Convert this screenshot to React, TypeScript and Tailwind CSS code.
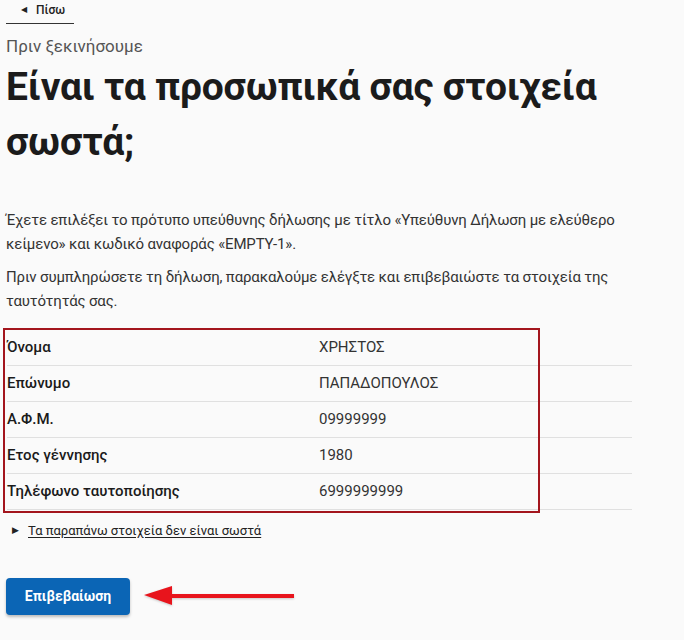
import { useState } from "react";

const ROWS = [
  { label: "Όνομα", value: "ΧΡΗΣΤΟΣ" },
  { label: "Επώνυμο", value: "ΠΑΠΑΔΟΠΟΥΛΟΣ" },
  { label: "Α.Φ.Μ.", value: "09999999" },
  { label: "Ετος γέννησης", value: "1980" },
  { label: "Τηλέφωνο ταυτοποίησης", value: "6999999999" },
];

export default function App() {
  const [open, setOpen] = useState(false);

  return (
    <main className="min-h-[640px] bg-[#fafafa] px-[6px] font-['Roboto',sans-serif] text-[#1b1b1b]">
      <div className="w-[68px] border-b border-[#333] pb-[4px] pl-[15px] pt-[1px]">
        <a href="#" className="flex items-center gap-[9px] text-[12px] font-medium text-[#222]">
          <span className="text-[8px]">◀</span>
          Πίσω
        </a>
      </div>

      <p className="mt-[10px] text-[17px] leading-[24px] text-[#555]">Πριν ξεκινήσουμε</p>
      <h1 className="mt-[2px] text-[39px] font-bold leading-[55px] tracking-[-0.2px] text-[#1b1b1b]">
        Είναι τα προσωπικά σας στοιχεία σωστά;
      </h1>

      <div className="mt-[38px] w-[632px] text-[15px] leading-[24px] tracking-[-0.15px] text-[#333]">
        <p>
          Έχετε επιλέξει το πρότυπο υπεύθυνης δήλωσης με τίτλο «Υπεύθυνη Δήλωση με ελεύθερο κείμενο» και
          κωδικό αναφοράς «EMPTY-1».
        </p>
        <p className="mt-[9px]">
          Πριν συμπληρώσετε τη δήλωση, παρακαλούμε ελέγξτε και επιβεβαιώστε τα στοιχεία της ταυτότητάς σας.
        </p>
      </div>

      <div className="relative mt-[17px] w-[626px] pl-px">
        <div className="pointer-events-none absolute left-[-3px] top-[-2px] h-[185px] w-[537px] border-2 border-[#a3151d]" />
        {ROWS.map((row) => (
          <div key={row.label} className="grid h-[36px] grid-cols-[312px_1fr] items-center border-b border-[#e0e0e0] text-[15px]">
            <span className="font-medium text-[#1b1b1b]">{row.label}</span>
            <span className="text-[#333]">{row.value}</span>
          </div>
        ))}
      </div>

      <button
        type="button"
        onClick={() => setOpen(!open)}
        className="mt-[11px] flex items-center gap-[9px] pl-[6px] text-[13px] text-[#222]"
      >
        <span className="text-[9px]">▶</span>
        <span className="underline underline-offset-2">Τα παραπάνω στοιχεία δεν είναι σωστά</span>
      </button>

      <div className="mt-[37px] flex items-center gap-[14px]">
        <button
          type="button"
          className="h-[37px] w-[124px] rounded-[4px] bg-[#0b65b5] text-[14px] font-bold text-white shadow-[0_2px_3px_rgba(0,0,0,0.25)]"
        >
          Επιβεβαίωση
        </button>
        <svg width="152" height="24" viewBox="0 0 152 24" className="drop-shadow-[0_1px_1px_rgba(0,0,0,0.2)]">
          <rect x="26" y="10" width="124" height="4" fill="#e8141c" />
          <polygon points="0,11 28,2 28,21" fill="#e8141c" />
        </svg>
      </div>
    </main>
  );
}
